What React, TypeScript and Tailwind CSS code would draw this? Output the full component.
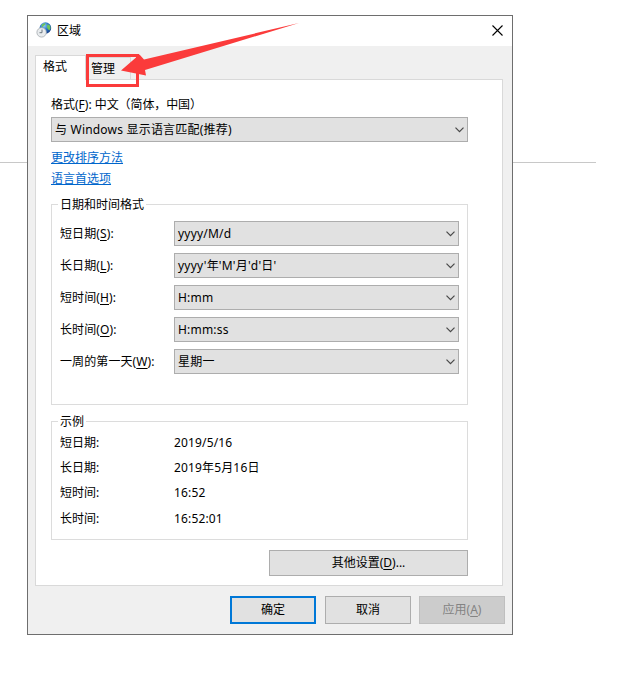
import type { ReactNode } from "react";

const Key = ({ children }: { children: ReactNode }) => (
  <span className="underline underline-offset-2">{children}</span>
);

const Chevron = () => (
  <svg
    className="mr-[3.5px] h-[6px] w-[9px] shrink-0"
    viewBox="0 0 9 6"
    fill="none"
    stroke="#484848"
    strokeWidth="1.2"
  >
    <path d="M0.5 0.7l4 4 4-4" />
  </svg>
);

const Select = ({ value }: { value: string }) => (
  <div className="flex h-[25px] flex-1 items-center justify-between border border-[#adadad] bg-[#e1e1e1] pl-[3px]">
    <span className="tracking-[0.2px] whitespace-pre">{value}</span>
    <Chevron />
  </div>
);

const GlobeIcon = () => (
  <svg className="-mt-0.5 h-4 w-4" viewBox="0 0 16 16">
    <defs>
      <radialGradient id="sea" cx=".4" cy=".3" r=".7">
        <stop offset="0" stopColor="#8fd0f5" />
        <stop offset=".5" stopColor="#2c78c8" />
        <stop offset="1" stopColor="#123f8c" />
      </radialGradient>
    </defs>
    <circle cx="9.4" cy="6" r="5.8" fill="url(#sea)" />
    <path
      d="M5.500 3C7 1.400 8.500 1 9.500 1.200l-.5 1.800-1.800 1-1 1.800zM11.500 2.500l1.800.3c1 1.200 1.300 2.200 1.200 3.700l-1.200 2-1.500-1.500-1-2z"
      fill="#6cc35a"
    />
    <circle cx="5.600" cy="10.400" r="4.700" fill="#e9ecee" stroke="#a3aaae" strokeWidth=".8" />
    <path d="M6 7.500v3.200H3.500" fill="none" stroke="#5d6b74" strokeWidth=".9" />
  </svg>
);

const formats = [
  { label: "短日期", hotkey: "S", value: "yyyy/M/d" },
  { label: "长日期", hotkey: "L", value: "yyyy'年'M'月'd'日'" },
  { label: "短时间", hotkey: "H", value: "H:mm" },
  { label: "长时间", hotkey: "O", value: "H:mm:ss" },
  { label: "一周的第一天", hotkey: "W", value: "星期一" },
];

const examples = [
  { label: "短日期:", value: "2019/5/16" },
  { label: "长日期:", value: "2019年5月16日" },
  { label: "短时间:", value: "16:52" },
  { label: "长时间:", value: "16:52:01" },
];

const Legend = ({ children }: { children: ReactNode }) => (
  <div className="absolute -top-2 left-[6px] bg-white px-[2px] leading-4">
    {children}
  </div>
);

const App = () => {
  return (
    <div className="relative h-[699px] w-[642px] overflow-hidden bg-white pt-[15px] pl-[27px] font-['Noto_Sans','Noto_Sans_CJK_SC',sans-serif] text-[12px] leading-4 text-black">
      <div className="absolute top-[162px] left-0 h-px w-[596px] bg-[#c8c8c8]" />

      <div className="relative flex h-[620px] w-[486px] flex-col border border-[#6e6e6e] bg-[#f0f0f0]">
        <div className="flex h-[30px] shrink-0 items-center bg-white pr-[9px] pl-2">
          <GlobeIcon />
          <span className="ml-[5px] flex-1">区域</span>
          <svg className="-mt-px h-[11px] w-[11px]" viewBox="0 0 11 11" stroke="#000" strokeWidth="1.1">
            <path d="M.5.5l10 10M10.500.5l-10 10" />
          </svg>
        </div>

        <div className="flex h-[33px] shrink-0 items-end pt-[9px] pl-[7px]">
          <div className="relative z-10 -mb-px h-[25px] w-[51px] border border-b-0 border-[#d9d9d9] bg-white pt-[3px] pl-[7px]">
            格式
          </div>
          <div className="h-[22px] w-[45px] border border-b-0 border-l-0 border-[#d9d9d9] bg-[#f0f0f0] pt-[3px] pl-[5px]">
            管理
          </div>
        </div>

        <div className="ml-[7px] flex h-[507px] w-[468px] shrink-0 flex-col border border-[#d9d9d9] bg-white pt-[17px] pr-[34px] pl-[15px]">
          <div className="h-5 shrink-0 whitespace-nowrap">
            格式(<Key>F</Key>): <span className="tracking-[-0.1px]">中文（简体，中国）</span>
          </div>
          <div className="flex shrink-0">
            <Select value="与 Windows 显示语言匹配(推荐)" />
          </div>
          <div className="mt-2 flex shrink-0 flex-col items-start gap-[5px] text-[#0066cc] underline">
            <a href="#">更改排序方法</a>
            <a href="#">语言首选项</a>
          </div>

          <div className="relative mt-[17px] flex h-[201px] shrink-0 flex-col gap-[7px] border border-[#dcdcdc] pt-4 pr-2 pl-2">
            <Legend>日期和时间格式</Legend>
            {formats.map((f) => (
              <div key={f.label} className="flex items-center">
                <span className="w-[114px] tracking-[0.1px]">
                  {f.label}(<Key>{f.hotkey}</Key>):
                </span>
                <Select value={f.value} />
              </div>
            ))}
          </div>

          <div className="relative mt-4 h-[119px] shrink-0 border border-[#dcdcdc] pt-2 pl-2">
            <Legend>示例</Legend>
            {examples.map((e) => (
              <div key={e.label} className="flex h-[25.4px] items-center">
                <span className="w-[114px]">{e.label}</span>
                <span className="tracking-[0.15px]">{e.value}</span>
              </div>
            ))}
          </div>

          <button className="mt-[10px] h-[26px] w-[199px] shrink-0 self-end border border-[#adadad] bg-[#e1e1e1]">
            其他设置(<Key>D</Key>)...
          </button>
        </div>

        <div className="mt-[10px] flex justify-end pr-[7px]">
          <button className="h-7 w-[86px] border-2 border-[#0078d7] bg-[#e1e1e1]">确定</button>
          <button className="ml-[9px] h-7 w-[86px] border border-[#adadad] bg-[#e1e1e1]">取消</button>
          <button className="ml-2 h-7 w-[86px] border border-[#bfbfbf] bg-[#cccccc] text-[#838383]">
            应用(<Key>A</Key>)
          </button>
        </div>
      </div>

      {/* highlight around the second tab */}
      <div className="absolute top-[54px] left-[86px] z-20 h-[33px] w-[53px] border-3 border-[#fb3b3b]" />
      <svg className="absolute top-5 left-[115px] z-20 h-[60px] w-[190px]" viewBox="115 20 190 60">
        <path d="M299 23L144 59.500 139.500 54.500 121 70.500 146 75.500 145 70z" fill="#fb3b3b" />
      </svg>
    </div>
  );
};

export default App;
